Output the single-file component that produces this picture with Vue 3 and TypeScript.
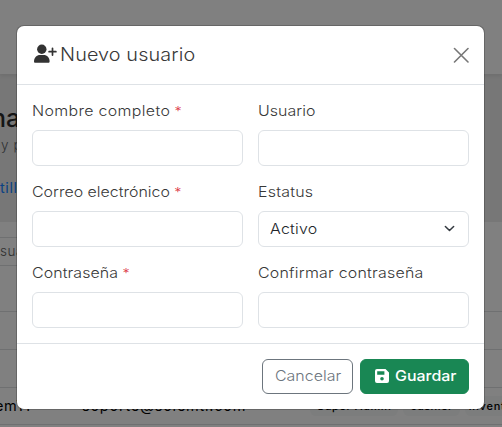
<script setup lang="ts">
import { ref } from 'vue'

interface Field {
  id: string
  label: string
  type: 'text' | 'email' | 'password' | 'select'
  required?: boolean
  spacing: string
}

const fields: Field[] = [
  { id: 'name', label: 'Nombre completo', type: 'text', required: true, spacing: '0.3px' },
  { id: 'user', label: 'Usuario', type: 'text', spacing: '0.05px' },
  { id: 'email', label: 'Correo electrónico', type: 'email', required: true, spacing: '0' },
  { id: 'status', label: 'Estatus', type: 'select', spacing: '0.2px' },
  { id: 'password', label: 'Contraseña', type: 'password', required: true, spacing: '0.07px' },
  { id: 'confirm', label: 'Confirmar contraseña', type: 'password', spacing: '0.2px' },
]

const roles: string[] = ['Super Admin', 'cashier', 'inventory']
const status = ref('Activo')
</script>

<template>
  <div class="screen">
    <div class="page" aria-hidden="true">
      <div class="topbar"></div>
      <div class="intro">
        <div class="page-title">na</div>
        <div class="page-sub">y p</div>
        <div class="page-link">till</div>
      </div>
      <div class="table">
        <div class="search">sua</div>
        <div class="row head"></div>
        <div class="row"></div>
        <div class="row"></div>
        <div class="row user-row">
          <span class="user-name">emTI</span>
          <span class="user-mail">soporte@solemti.com</span>
          <span class="roles"><span v-for="role in roles" :key="role" class="role">{{ role }}</span></span>
        </div>
        <div class="row"></div>
      </div>
    </div>

    <form class="modal" @submit.prevent>
      <header class="modal-header">
        <svg class="user-icon" width="24" height="20" viewBox="0 0 24 20">
          <circle cx="8.8" cy="5.2" r="4.7" />
          <path d="M1 17.4C1 13.5 3.8 11 7 11h3.8c3.2 0 5.8 2.5 5.8 6.4 0 .8-.5 1.3-1.3 1.3H2.3c-.8 0-1.3-.5-1.3-1.3z" />
          <path d="M19.5 4.3v6.8M16.1 7.7h6.8" fill="none" stroke="currentColor" stroke-width="1.7" stroke-linecap="round" />
        </svg>
        <span class="title wide">Nuevo usuario</span>
        <button type="button" class="close" aria-label="Cerrar">
          <svg width="16" height="16" viewBox="0 0 16 16"><path d="M1.5 1.5l13.5 13.5M15 1.5L1.5 15" fill="none" stroke="currentColor" stroke-width="1.6" stroke-linecap="round" /></svg>
        </button>
      </header>

      <div class="modal-body">
        <div v-for="field in fields" :key="field.id" class="field">
          <label :for="field.id"><span class="wide"><span :style="{ letterSpacing: field.spacing }">{{ field.label }}</span><span v-if="field.required" class="star">*</span></span></label>
          <button v-if="field.type === 'select'" :id="field.id" type="button" class="control select">
            <span class="wide">{{ status }}</span>
            <svg class="chevron" width="11" height="11" viewBox="0 0 16 16"><path d="M2 5l6 6 6-6" fill="none" stroke="currentColor" stroke-width="2.2" stroke-linecap="round" stroke-linejoin="round" /></svg>
          </button>
          <input v-else :id="field.id" :type="field.type" class="control">
        </div>
      </div>

      <footer class="modal-footer">
        <button type="button" class="btn cancel"><span class="wide">Cancelar</span></button>
        <button type="submit" class="btn save">
          <svg width="14" height="14" viewBox="0 0 14 14"><path fill-rule="evenodd" d="M2 0h8.5L14 3.5V12a2 2 0 0 1-2 2H2a2 2 0 0 1-2-2V2a2 2 0 0 1 2-2zM2.2 2.2v3.6h7.2V2.2zM7 7.9a1.8 1.8 0 1 0 0 3.6 1.8 1.8 0 0 0 0-3.6z" /></svg>
          <span class="wide">Guardar</span>
        </button>
      </footer>
    </form>
  </div>
</template>

<style>
body {
  margin: 0;
  overflow: hidden;
}
</style>

<style scoped>
* {
  box-sizing: border-box;
}

.screen {
  position: relative;
  width: 502px;
  height: 427px;
  overflow: hidden;
  font-family: Inter, "Open Sans", sans-serif;
  font-size: 14.5px;
  font-weight: 300;
  color: #212529;
}

.wide {
  display: inline-block;
  transform: scaleX(1.1);
  transform-origin: left center;
}

.page {
  height: 427px;
  background: #777;
  overflow: hidden;
}

.topbar {
  height: 74px;
  background: #808080;
  box-shadow: 0 2px 4px rgba(0, 0, 0, 0.08);
}

.intro {
  height: 148px;
  padding-top: 27px;
}

.page-title {
  height: 34px;
  margin-left: -9px;
  font-size: 25px;
  font-weight: 500;
  line-height: 34px;
  color: #151515;
}

.page-sub {
  height: 20px;
  padding-left: 1px;
  font-size: 13.5px;
  line-height: 20px;
  letter-spacing: 0.6px;
  color: #2f3133;
}

.page-link {
  padding-top: 23px;
  line-height: 20px;
  letter-spacing: 0.6px;
  font-weight: 400;
  color: #0a4284;
}

.table {
  height: 205px;
  padding-top: 15px;
  background: #808080;
}

.search {
  width: 200px;
  height: 29px;
  border: solid #6f7071;
  border-width: 1px 0;
  line-height: 27px;
  font-size: 13.5px;
  letter-spacing: 0.5px;
  color: #303030;
}

.row {
  height: 38px;
  border-bottom: 1px solid #6f7071;
}

.row.head {
  height: 46px;
}

.user-row {
  display: grid;
  grid-template-columns: 82px 234px 1fr;
  height: 37px;
  line-height: 36px;
  color: #000;
  font-weight: 400;
}

.user-name {
  margin-left: -5px;
  letter-spacing: 0.6px;
}

.user-mail {
  letter-spacing: 0.76px;
}

.roles {
  display: flex;
  align-items: center;
  gap: 5px;
  margin-left: -6px;
}

.role {
  height: 20px;
  padding: 0 7px;
  border-radius: 6px;
  background: #7c7d7d;
  font-size: 11px;
  font-weight: 500;
  line-height: 20px;
  white-space: nowrap;
  letter-spacing: 0.5px;
}

.role:first-child {
  letter-spacing: 0.6px;
}

.role:nth-child(3) {
  padding-left: 4px;
  letter-spacing: 0.8px;
}

.modal {
  position: absolute;
  top: 26px;
  left: 17px;
  display: flex;
  flex-direction: column;
  width: 467px;
  height: 383px;
  border-radius: 7px;
  background: #fff;
  box-shadow: 0 0 0 1px rgba(0, 0, 0, 0.2);
}

.modal-header {
  display: flex;
  align-items: center;
  height: 59px;
  padding: 0 15px 0 16px;
  border-bottom: 1px solid #dee2e6;
}

.user-icon {
  margin-bottom: 3px;
  fill: #333;
  color: #333;
}

.title {
  margin-left: 2.5px;
  font-size: 18px;
  line-height: 26px;
  letter-spacing: 0.1px;
  color: #383838;
}

.close {
  display: flex;
  margin-left: auto;
  padding: 0;
  border: 0;
  background: none;
  color: #777;
}

.modal-body {
  display: grid;
  grid-template-columns: 1fr 1fr;
  grid-auto-rows: 81px;
  column-gap: 15px;
  height: 258px;
  padding: 15px 15px 0;
}

label {
  display: flex;
  height: 30px;
  line-height: 22px;
  white-space: nowrap;
  color: #383838;
}

.star {
  margin-left: 4px;
  font-size: 13px;
  color: #dc3545;
}

.control {
  display: block;
  width: 100%;
  height: 36px;
  padding: 0 12px;
  border: 1px solid #dee2e6;
  border-radius: 6px;
  background: #fff;
  font: inherit;
  color: #212529;
  outline: none;
}

.select {
  display: flex;
  align-items: center;
  justify-content: space-between;
  padding: 0 13px 1px 11px;
  letter-spacing: 0.2px;
}

.chevron {
  color: #343a40;
}

.modal-footer {
  display: flex;
  justify-content: flex-end;
  gap: 7px;
  height: 66px;
  padding: 15px 15px 0;
  border-top: 1px solid #dee2e6;
}

.btn {
  display: flex;
  align-items: center;
  height: 35px;
  padding: 0 0 2px;
  border: 1px solid #6c757d;
  border-radius: 6px;
  background: #fff;
  font: inherit;
}

.cancel {
  width: 91px;
  padding-left: 11.7px;
  color: #6c757d;
}

.save {
  gap: 5.7px;
  width: 109px;
  padding-left: 14px;
  border-color: #198754;
  background: #198754;
  color: #fff;
  font-weight: 500;
}

.save svg {
  fill: currentColor;
}
</style>
